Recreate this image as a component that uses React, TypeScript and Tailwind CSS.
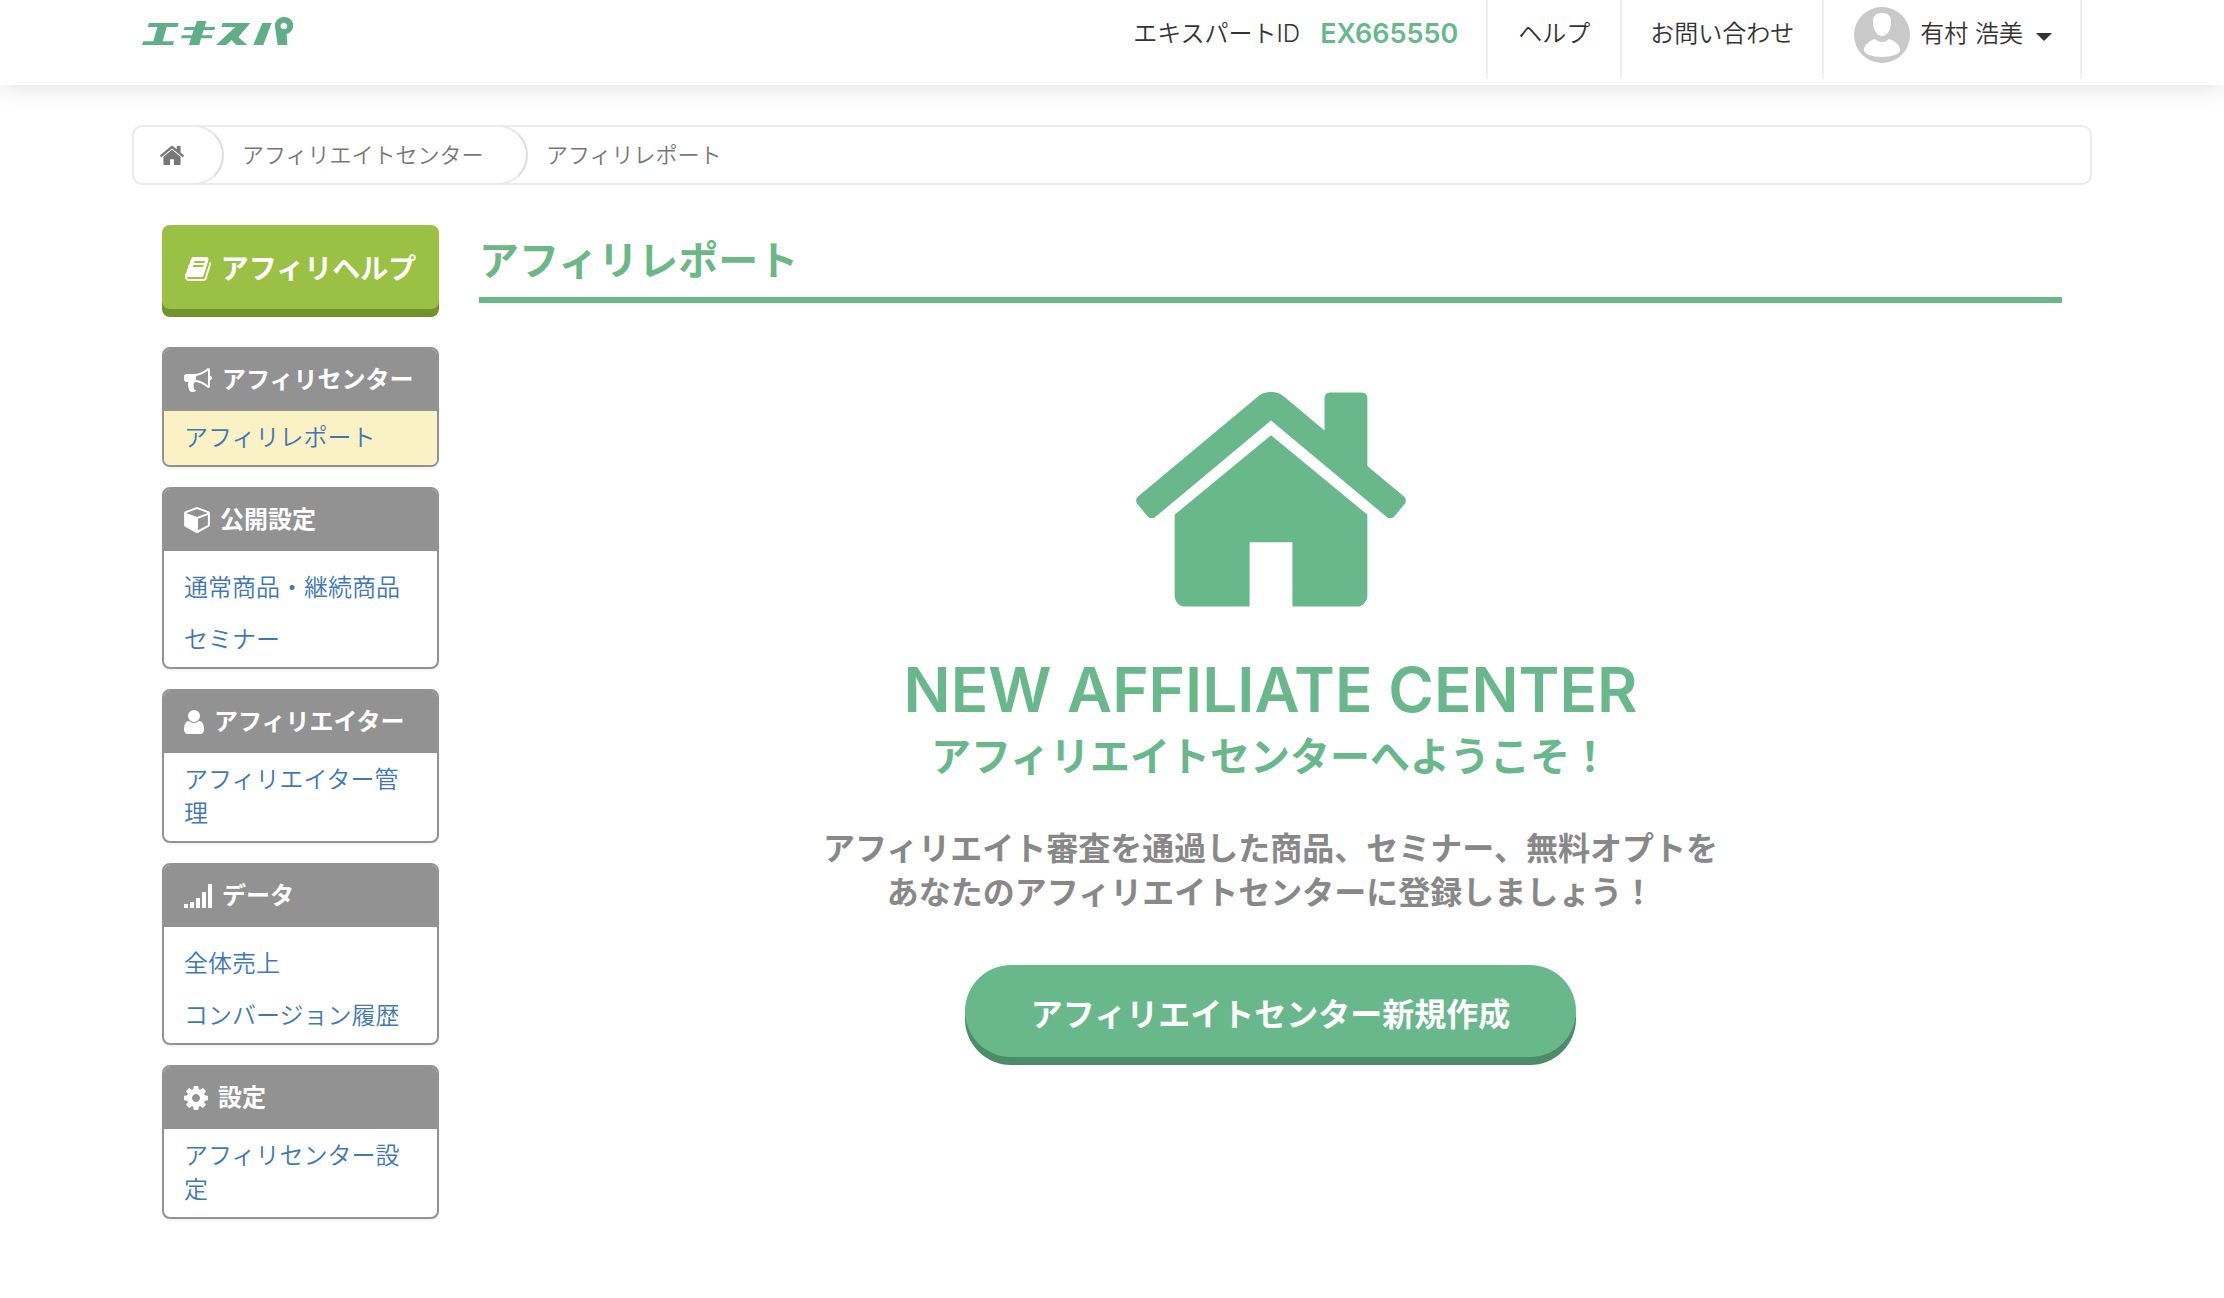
import { ReactNode } from "react";

const ICONS = {
  home: {
    viewBox: "89 256 1614 1280",
    path: "M1472 992v480q0 26-19 45t-45 19h-384v-384h-256v384h-384q-26 0-45-19t-19-45v-480q0-1 .5-3t.5-3l575-474 575 474q1 2 1 6zm223-69l-62 74q-8 9-21 11h-3q-13 0-21-7l-692-577-692 577q-12 8-24 7-13-2-21-11l-62-74q-8-10-7-23.5t11-21.5l719-599q32-26 76-26t76 26l244 204v-195q0-14 9-23t23-9h192q14 0 23 9t9 23v408l219 182q10 8 11 21.5t-7 23.5z",
  },
  book: {
    viewBox: "64 128 1664 1536",
    path: "M1703 478q40 57 18 129l-275 906q-19 64-76.5 107.5t-122.5 43.5h-923q-77 0-148.5-53.5t-99.5-131.5q-24-67-2-127 0-4 3-27t4-37q1-8-3-21.5t-3-19.5q2-11 8-21t16.5-23.5 16.5-23.5q23-38 45-91.5t30-91.5q3-10 .5-30t-.5-28q3-11 17-28t17-23q21-36 42-92t25-90q1-9-2.5-32t.5-28q4-13 22-30.5t22-22.5q19-26 42.5-84.5t27.5-96.5q1-8-3-25.5t-2-26.5q2-8 9-18t18-23 17-21q8-12 16.5-30.5t15-35 16-36 19.5-32 26.5-23.5 36-11.5 47.5 5.5l-1 3q38-9 51-9h761q74 0 114 56t18 130l-274 906q-36 119-71.5 153.5t-128.5 34.5h-869q-27 0-38 15-11 16-1 43 24 70 144 70h923q29 0 56-15.5t35-41.5l300-987q7-22 5-57 38 15 59 43zm-1064 2q-4 13 2 22.5t20 9.5h608q13 0 25.5-9.5t16.5-22.5l21-64q4-13-2-22.5t-20-9.5h-608q-13 0-25.5 9.5t-16.5 22.5zm-83 256q-4 13 2 22.5t20 9.5h608q13 0 25.5-9.5t16.5-22.5l21-64q4-13-2-22.5t-20-9.5h-608q-13 0-25.5 9.5t-16.5 22.5z",
  },
  bullhorn: {
    viewBox: "0 128 1792 1536",
    path: "M1664 640q53 0 90.5 37.5t37.5 90.5-37.5 90.5-90.5 37.5v384q0 52-38 90t-90 38q-417-347-812-380-58 19-91 66t-31 100.5 40 92.5q-20 33-23 65.5t6 58 33.5 55 48 50 61.5 50.5q-29 58-111.5 83t-168.5 11.5-132-55.5q-7-23-29.5-87.5t-32-94.5-23-89-15-101 3.5-98.5 22-110.5h-122q-66 0-113-47t-47-113v-192q0-66 47-113t113-47h480q435 0 896-384 52 0 90 38t38 90v384zm-128 604v-954q-394 302-768 343v270q377 42 768 341z",
  },
  cube: {
    viewBox: "0 120 1664 1680",
    path: "M896 1629l640-349v-636l-640 233v752zm-64-865l698-254-698-254-698 254zm832-252v768q0 35-18 65t-49 47l-704 384q-28 16-61 16t-61-16l-704-384q-31-17-49-47t-18-65v-768q0-40 23-73t61-47l704-256q22-8 44-8t44 8l704 256q38 14 61 47t23 73z",
  },
  user: {
    viewBox: "256 128 1280 1536",
    path: "M1536 1399q0 109-62.5 187t-150.5 78h-854q-88 0-150.5-78t-62.5-187q0-85 8.5-160.5t31.5-152 58.5-131 94-89 134.5-34.5q131 128 313 128t313-128q76 0 134.5 34.5t94 89 58.5 131 31.5 152 8.5 160.5zm-256-887q0 159-112.5 271.5t-271.5 112.5-271.5-112.5-112.5-271.5 112.5-271.5 271.5-112.5 271.5 112.5 112.5 271.5z",
  },
  signal: {
    viewBox: "0 0 28 24",
    path: "M0 20h4v4h-4zM6 18h4v6h-4zM12 14h4v10h-4zM18 8h4v16h-4zM24 0h4v24h-4z",
  },
  cog: {
    viewBox: "128 128 1536 1536",
    path: "M1152 896q0-106-75-181t-181-75-181 75-75 181 75 181 181 75 181-75 75-181zm512-109v222q0 12-8 23t-20 13l-185 28q-19 54-39 91 35 50 107 138 10 12 10 25t-9 23q-27 37-99 108t-94 71q-12 0-26-9l-138-108q-44 23-91 38-16 136-29 186-7 28-36 28h-222q-14 0-24.5-8.5t-11.5-21.5l-28-184q-49-16-90-37l-141 107q-10 9-25 9-14 0-25-11-126-114-165-168-7-10-7-23 0-12 8-23 15-21 51-66.5t54-70.5q-27-50-41-99l-183-27q-13-2-21-12.5t-8-23.5v-222q0-12 8-23t19-13l186-28q14-46 39-92-40-57-107-138-10-12-10-24 0-10 9-23 26-36 98.5-107.5t94.5-71.5q13 0 26 10l138 107q44-23 91-38 16-136 29-186 7-28 36-28h222q14 0 24.5 8.5t11.5 21.5l28 184q49 16 90 37l142-107q9-9 24-9 13 0 25 10 129 119 165 170 7 8 7 22 0 12-8 23-15 21-51 66.5t-54 70.5q26 50 41 98l183 28q13 2 21 12.5t8 23.5z",
  },
};

interface IconProps {
  name: keyof typeof ICONS;
  className: string;
}

function Icon({ name, className }: IconProps) {
  return (
    <svg
      viewBox={ICONS[name].viewBox}
      className={`shrink-0 fill-current ${className}`}
      aria-hidden="true"
    >
      <path d={ICONS[name].path} />
    </svg>
  );
}

function Logo() {
  return (
    <svg
      viewBox="38 36 453 84"
      className="h-7 w-[151px] fill-[#60ae87]"
      role="img"
      aria-label="エキスパ"
    >
      <path d="M59 54h89l-4 12h-32l-12 43h34l-3 11H38l4-11h30l12-43H55z" />
      <path d="M203 48h28l-5 18h32l-3 9h-32l-5 16h32l-3 9h-32l-5 20h-31l6-20h-30l3-9h30l5-16h-30l3-9h30z" />
      <path d="M280 54h83l-36 42 27 24h-34l-13-15-17 15h-30l58-54h-42z" />
      <path d="M399 54h28l-25 66h-30z" />
      <path
        fillRule="evenodd"
        d="M463 36a27 26 0 0 1 9 51l2 33h-29l-8-55a26 27 0 0 1 26-29zM463 53a10 10 0 1 0 1 0z"
      />
    </svg>
  );
}

function Avatar() {
  return (
    <svg viewBox="0 0 56 56" className="size-14" aria-hidden="true">
      <circle cx="28" cy="28" r="28" fill="#c9c9c9" />
      <path
        d="M28 6c-6 0-9 3-9 8 0 8 3 15 9 15s9-7 9-15c0-5-3-8-9-8z"
        fill="#fff"
      />
      <path
        d="M21 32c-6 2-11 6-11 11 0 4 8 7 18 7s18-3 18-7c0-5-5-9-11-11-2 2-4 3-7 3s-5-1-7-3z"
        fill="#fff"
      />
    </svg>
  );
}

function Header() {
  return (
    <header className="shadow-[0_0_24px_rgba(0,0,0,0.15)]">
      <div className="mx-auto flex max-w-[1960px] items-start justify-between px-[10px]">
        <a href="#" className="pt-[17px]">
          <Logo />
        </a>
        <nav className="mb-[6px] flex h-[79px] text-2xl font-[350] text-[#333]">
          <div className="flex items-start gap-5 border-r-2 border-[#efefef] pt-[18px] pr-7">
            <span>エキスパートID</span>
            <span className="text-[27px]/8 font-semibold text-[#68b88c]">
              EX665550
            </span>
          </div>
          <a
            href="#"
            className="border-r-2 border-[#efefef] px-[30px] pt-[18px]"
          >
            ヘルプ
          </a>
          <a href="#" className="border-r-2 border-[#efefef] px-7 pt-[18px]">
            お問い合わせ
          </a>
          <button
            type="button"
            className="flex items-start border-r-2 border-[#efefef] pr-7 pl-[30px]"
          >
            <span className="pt-[7px] pr-[10px]">
              <Avatar />
            </span>
            <span className="pt-[18px] pr-[13px]">有村 浩美</span>
            <svg viewBox="0 0 16 8" className="mt-[33px] h-2 w-4 fill-[#333]">
              <path d="M0 0h16l-8 8z" />
            </svg>
          </button>
        </nav>
      </div>
    </header>
  );
}

function Breadcrumb() {
  return (
    <nav
      aria-label="breadcrumb"
      className="mt-10 flex h-[60px] items-stretch rounded-[10px] border-2 border-[#ebebeb] text-[22px] font-[350] text-[#777]"
    >
      <a
        href="#"
        aria-label="ホーム"
        className="-my-[2px] -ml-[2px] flex w-[92px] items-center rounded-l-[10px] rounded-r-[30px] border-2 border-[#ebebeb] border-r-[#ddd] pl-[26px]"
      >
        <Icon name="home" className="h-[19px] w-6" />
      </a>
      <a
        href="#"
        className="-my-[2px] flex w-[304px] items-center rounded-r-[30px] border-y-2 border-r-2 border-[#ebebeb] border-r-[#ddd] pl-[18px]"
      >
        アフィリエイトセンター
      </a>
      <span className="flex items-center pl-[18px]">アフィリレポート</span>
    </nav>
  );
}

interface PanelProps {
  icon: ReactNode;
  title: string;
  links: string[];
  active?: boolean;
}

function Panel({ icon, title, links, active = false }: PanelProps) {
  return (
    <section className="overflow-hidden rounded-lg border-2 border-[#929292] bg-white shadow-[0_2px_2px_rgba(0,0,0,0.05)]">
      <h2 className="flex h-[62px] items-center gap-[10px] bg-[#929292] pl-5 text-2xl font-bold text-white">
        {icon}
        {title}
      </h2>
      <ul className={links.length > 1 ? "pt-[10px] pb-[2px]" : ""}>
        {links.map((link) => (
          <li
            key={link}
            className={`px-5 pt-[10px] text-2xl/[34px] font-[350] text-[#4078b5] ${
              active ? "bg-[#faf2c5]" : ""
            } ${links.length > 1 ? "pb-2" : "pb-[10px]"}`}
          >
            <a href="#" className="break-all">
              {link}
            </a>
          </li>
        ))}
      </ul>
    </section>
  );
}

function Sidebar() {
  return (
    <aside className="w-[277px] shrink-0">
      <a
        href="#"
        className="mb-[38px] flex h-[84px] items-center justify-center gap-[10px] rounded-lg bg-[#9ac143] pt-1 text-[28px] font-bold text-white shadow-[0_8px_0_#73912f]"
      >
        <Icon name="book" className="h-6 w-[26px]" />
        アフィリヘルプ
      </a>
      <div className="flex flex-col gap-5">
        <Panel
          icon={<Icon name="bullhorn" className="h-6 w-7" />}
          title="アフィリセンター"
          links={["アフィリレポート"]}
          active
        />
        <Panel
          icon={<Icon name="cube" className="size-[26px]" />}
          title="公開設定"
          links={["通常商品・継続商品", "セミナー"]}
        />
        <Panel
          icon={<Icon name="user" className="h-6 w-5" />}
          title="アフィリエイター"
          links={["アフィリエイター管理"]}
        />
        <Panel
          icon={<Icon name="signal" className="h-6 w-7" />}
          title="データ"
          links={["全体売上", "コンバージョン履歴"]}
        />
        <Panel
          icon={<Icon name="cog" className="size-6" />}
          title="設定"
          links={["アフィリセンター設定"]}
        />
      </div>
    </aside>
  );
}

function Welcome() {
  return (
    <main className="min-w-0 flex-1">
      <h1 className="border-b-[6px] border-[#6bb886] py-[6px] text-[40px]/[60px] font-bold text-[#6bb886]">
        アフィリレポート
      </h1>
      <div className="flex flex-col items-center text-center text-[#68b88c]">
        <Icon name="home" className="mt-[89px] h-[215px] w-[270px]" />
        <p className="mt-[46px] text-[62px]/[74px] font-semibold">
          NEW AFFILIATE CENTER
        </p>
        <p className="text-[40px]/[60px] font-bold">
          アフィリエイトセンターへようこそ！
        </p>
        <p className="mt-10 text-[32px]/[44px] font-bold text-[#888]">
          アフィリエイト審査を通過した商品、セミナー、無料オプトを
          <br />
          あなたのアフィリエイトセンターに登録しましょう！
        </p>
        <button
          type="button"
          className="mt-[50px] h-[92px] rounded-full bg-[#68b88c] px-[66px] pt-2 text-[32px] font-bold text-white shadow-[0_8px_0_#4d8b69]"
        >
          アフィリエイトセンター新規作成
        </button>
      </div>
    </main>
  );
}

function App() {
  return (
    <div className="min-h-screen bg-white font-['Inter','Noto_Sans_CJK_JP',sans-serif]">
      <Header />
      <div className="mx-auto max-w-[1960px]">
        <Breadcrumb />
        <div className="mt-10 flex gap-10 px-[30px] pb-20">
          <Sidebar />
          <Welcome />
        </div>
      </div>
    </div>
  );
}

export default App;
